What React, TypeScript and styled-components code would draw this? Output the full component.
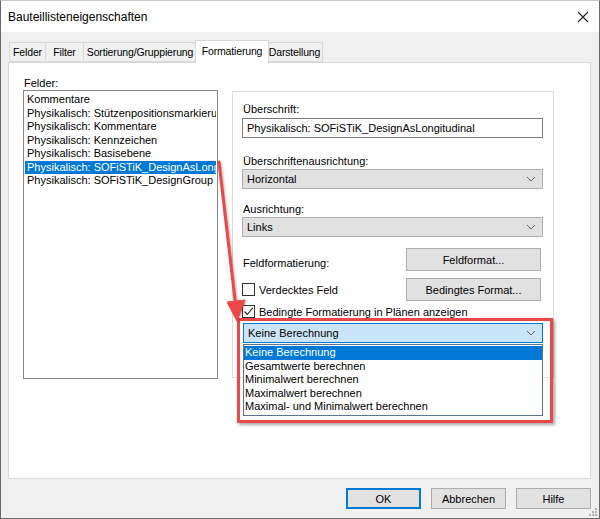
import React from 'react';
import styled, { createGlobalStyle } from 'styled-components';

const GlobalStyle = createGlobalStyle`
  html, body {
    margin: 0;
    padding: 0;
    background: #ffffff;
  }
  * {
    box-sizing: border-box;
  }
`;

const fields = [
  'Kommentare',
  'Physikalisch: Stützenpositionsmarkierung',
  'Physikalisch: Kommentare',
  'Physikalisch: Kennzeichen',
  'Physikalisch: Basisebene',
  'Physikalisch: SOFiSTiK_DesignAsLongitudinal',
  'Physikalisch: SOFiSTiK_DesignGroup',
];

// tab widths taken from the dialog, the active one overlaps its neighbours
const tabs = [
  { label: 'Felder', width: 37 },
  { label: 'Filter', width: 39 },
  { label: 'Sortierung/Gruppierung', width: 114 },
  { label: 'Formatierung', width: 74, active: true },
  { label: 'Darstellung', width: 57 },
];

const calcOptions = [
  'Keine Berechnung',
  'Gesamtwerte berechnen',
  'Minimalwert berechnen',
  'Maximalwert berechnen',
  'Maximal- und Minimalwert berechnen',
];

const Chevron = () => (
  <svg width="10" height="6" viewBox="0 0 10 6">
    <path d="M1 1 L5 5 L9 1" fill="none" stroke="#606060" strokeWidth="1" />
  </svg>
);

const App = () => {
  return (
    <>
      <GlobalStyle />
      <Window>
        <TitleBar>
          <Title>Bauteillisteneigenschaften</Title>
          <CloseIcon width="12" height="12" viewBox="0 0 12 12">
            <path d="M1 1 L11 11 M11 1 L1 11" stroke="#222" strokeWidth="1.1" />
          </CloseIcon>
        </TitleBar>
        <Client>
          <TabRow>
            {tabs.map((t) => (
              <Tab key={t.label} $active={t.active} $width={t.width}>
                {t.label}
              </Tab>
            ))}
          </TabRow>
          <Panel>
            <LeftColumn>
              <Label>Felder:</Label>
              <ListBox>
                {fields.map((f, i) => (
                  <ListItem key={f} $selected={i === 5}>
                    {f}
                  </ListItem>
                ))}
              </ListBox>
            </LeftColumn>
            <GroupBox>
              <Label>Überschrift:</Label>
              <TextBox>Physikalisch: SOFiSTiK_DesignAsLongitudinal</TextBox>
              <Label $top={16}>Überschriftenausrichtung:</Label>
              <Combo>
                <span>Horizontal</span>
                <Chevron />
              </Combo>
              <Label $top={13}>Ausrichtung:</Label>
              <Combo>
                <span>Links</span>
                <Chevron />
              </Combo>
              <ButtonRow $top={11} $align="flex-end">
                <RowLabel>Feldformatierung:</RowLabel>
                <Button $width={135}>Feldformat...</Button>
              </ButtonRow>
              <ButtonRow $top={7} $align="center">
                <CheckLine>
                  <CheckBox />
                  Verdecktes Feld
                </CheckLine>
                <Button $width={135}>Bedingtes Format...</Button>
              </ButtonRow>
              <CheckLine $top={4}>
                <CheckBox>
                  <svg width="11" height="11" viewBox="0 0 11 11">
                    <path d="M1.5 5.5 L4.3 8.5 L9.8 1.8" fill="none" stroke="#222" strokeWidth="1.1" />
                  </svg>
                </CheckBox>
                Bedingte Formatierung in Plänen anzeigen
              </CheckLine>
              <ComboWrap>
                <Combo $open>
                  <span>Keine Berechnung</span>
                  <Chevron />
                </Combo>
                <DropList>
                  {calcOptions.map((o, i) => (
                    <DropItem key={o} $selected={i === 0}>
                      {o}
                    </DropItem>
                  ))}
                </DropList>
              </ComboWrap>
            </GroupBox>
          </Panel>
          <Footer>
            <Button $width={75} $height={21} $default>OK</Button>
            <Button $width={75} $height={21}>Abbrechen</Button>
            <Button $width={75} $height={21}>Hilfe</Button>
          </Footer>
        </Client>
        <Highlight />
        <Arrow width="600" height="519" viewBox="0 0 600 519">
          <g stroke="#ec4848" fill="#ec4848">
            <line x1="219" y1="162" x2="236" y2="308" strokeWidth="3" strokeLinecap="round" />
            <polygon points="227,302 245,300 237,321" strokeWidth="1" />
          </g>
        </Arrow>
        <SizeGrip width="10" height="10" viewBox="0 0 10 10">
          <g fill="#b0b0b0">
            <rect x="7" y="1" width="2" height="2" />
            <rect x="4" y="4" width="2" height="2" />
            <rect x="7" y="4" width="2" height="2" />
            <rect x="1" y="7" width="2" height="2" />
            <rect x="4" y="7" width="2" height="2" />
            <rect x="7" y="7" width="2" height="2" />
          </g>
        </SizeGrip>
      </Window>
    </>
  );
};

const Window = styled.div`
  position: relative;
  width: 600px;
  height: 519px;
  border: 1px solid #6a6a6a;
  border-top-color: #c8c8c8;
  background: #f0f0f0;
  font-family: 'Liberation Sans', Arial, sans-serif;
  font-size: 11px;
  color: #000;
  display: flex;
  flex-direction: column;
  overflow: hidden;
`;

const TitleBar = styled.div`
  height: 31px;
  background: #ffffff;
  display: flex;
  align-items: center;
  justify-content: space-between;
  padding: 0 10px 0 7px;
`;

const Title = styled.div`
  font-size: 12px;
  color: #000;
`;

const CloseIcon = styled.svg`
  display: block;
`;

const Client = styled.div`
  flex: 1;
  display: flex;
  flex-direction: column;
  padding: 7px 8px 0 7px;
`;

const TabRow = styled.div`
  display: flex;
  align-items: flex-end;
  padding-left: 1px;
  height: 23px;
  position: relative;
  z-index: 1;
`;

const Tab = styled.div<{ $active?: boolean; $width: number }>`
  flex: none;
  width: ${(p) => p.$width}px;
  height: ${(p) => (p.$active ? 23 : 20)}px;
  margin: ${(p) => (p.$active ? '0 -2px -1px -2px' : '0 0 0 -1px')};
  padding-top: ${(p) => (p.$active ? 4 : 3)}px;
  background: ${(p) => (p.$active ? '#ffffff' : '#f0f0f0')};
  border: 1px solid #d9d9d9;
  border-bottom: ${(p) => (p.$active ? 'none' : '1px solid #d9d9d9')};
  text-align: center;
  font-size: 10.5px;
  letter-spacing: -0.15px;
  white-space: nowrap;
  position: relative;
  z-index: ${(p) => (p.$active ? 2 : 1)};
  &:first-child {
    margin-left: 0;
  }
`;

const Panel = styled.div`
  height: 417px;
  background: #ffffff;
  border: 1px solid #d9d9d9;
  display: flex;
  align-items: flex-start;
  gap: 14px;
  padding: 13px 0 0 14px;
`;

const LeftColumn = styled.div`
  width: 195px;
  display: flex;
  flex-direction: column;
`;

const Label = styled.div<{ $top?: number }>`
  height: 14px;
  line-height: 14px;
  padding-left: 1px;
  margin-top: ${(p) => p.$top || 0}px;
  white-space: nowrap;
`;

const ListBox = styled.div`
  height: 289px;
  border: 1px solid #828790;
  padding: 2px 1px 0 1px;
  overflow: hidden;
`;

const ListItem = styled.div<{ $selected?: boolean }>`
  height: 13.5px;
  line-height: 13.5px;
  padding-left: 2px;
  white-space: nowrap;
  overflow: hidden;
  background: ${(p) => (p.$selected ? '#0078d7' : 'transparent')};
  color: ${(p) => (p.$selected ? '#ffffff' : '#000000')};
`;

const GroupBox = styled.div`
  margin-top: 15px;
  width: 322px;
  height: 287px;
  border: 1px solid #dcdcdc;
  padding: 10px 10px 0 9px;
  display: flex;
  flex-direction: column;
`;

const TextBox = styled.div`
  margin-top: 2px;
  height: 20px;
  width: 301px;
  border: 1px solid #7a7a7a;
  background: #ffffff;
  padding-left: 4px;
  line-height: 18px;
  white-space: nowrap;
`;

const Combo = styled.div<{ $open?: boolean }>`
  margin-top: ${(p) => (p.$open ? 0 : 1)}px;
  height: 20px;
  width: ${(p) => (p.$open ? 300 : 301)}px;
  border: 1px solid ${(p) => (p.$open ? '#0078d7' : '#adadad')};
  background: ${(p) => (p.$open ? '#cce4f7' : '#e1e1e1')};
  display: flex;
  align-items: center;
  justify-content: space-between;
  padding: 0 6px 0 4px;
  white-space: nowrap;
`;

const ButtonRow = styled.div<{ $top: number; $align: string }>`
  margin-top: ${(p) => p.$top}px;
  width: 301px;
  display: flex;
  align-items: ${(p) => p.$align};
  justify-content: space-between;
  padding-right: 2px;
`;

const RowLabel = styled.div`
  padding-left: 1px;
  padding-bottom: 1px;
  line-height: 14px;
`;

const Button = styled.div<{ $width: number; $height?: number; $default?: boolean }>`
  width: ${(p) => p.$width}px;
  height: ${(p) => p.$height || 23}px;
  background: #e1e1e1;
  border: 1px solid ${(p) => (p.$default ? '#0078d7' : '#adadad')};
  box-shadow: ${(p) => (p.$default ? 'inset 0 0 0 1px #0078d7' : 'none')};
  display: flex;
  align-items: center;
  justify-content: center;
  white-space: nowrap;
`;

const CheckLine = styled.div<{ $top?: number }>`
  margin-top: ${(p) => p.$top || 0}px;
  display: flex;
  align-items: center;
  gap: 4px;
  height: 13px;
  white-space: nowrap;
`;

const CheckBox = styled.div`
  width: 13px;
  height: 13px;
  border: 1px solid #333333;
  background: #ffffff;
  display: flex;
  align-items: center;
  justify-content: center;
`;

const ComboWrap = styled.div`
  position: relative;
  margin-top: 5px;
  padding-left: 1px;
`;

const DropList = styled.div`
  position: absolute;
  top: 21px;
  left: 1px;
  width: 300px;
  border: 1px solid #5a7593;
  background: #ffffff;
  padding: 1px 0 1px 0;
  z-index: 3;
`;

const DropItem = styled.div<{ $selected?: boolean }>`
  height: 13.5px;
  line-height: 13.5px;
  padding-left: 1px;
  white-space: nowrap;
  background: ${(p) => (p.$selected ? '#0078d7' : '#ffffff')};
  color: ${(p) => (p.$selected ? '#ffffff' : '#000000')};
`;

const Footer = styled.div`
  display: flex;
  justify-content: flex-end;
  gap: 10px;
  margin-top: 9px;
`;

const Highlight = styled.div`
  position: absolute;
  left: 236px;
  top: 317px;
  width: 316px;
  height: 105px;
  border: 3px solid #ec4848;
  box-shadow: 2px 2px 3px rgba(0, 0, 0, 0.35);
  z-index: 4;
  pointer-events: none;
`;

const Arrow = styled.svg`
  position: absolute;
  left: -1px;
  top: -1px;
  z-index: 5;
  pointer-events: none;
  filter: drop-shadow(1px 1px 1px rgba(0, 0, 0, 0.3));
`;

const SizeGrip = styled.svg`
  position: absolute;
  right: 1px;
  bottom: 1px;
`;

export default App;
